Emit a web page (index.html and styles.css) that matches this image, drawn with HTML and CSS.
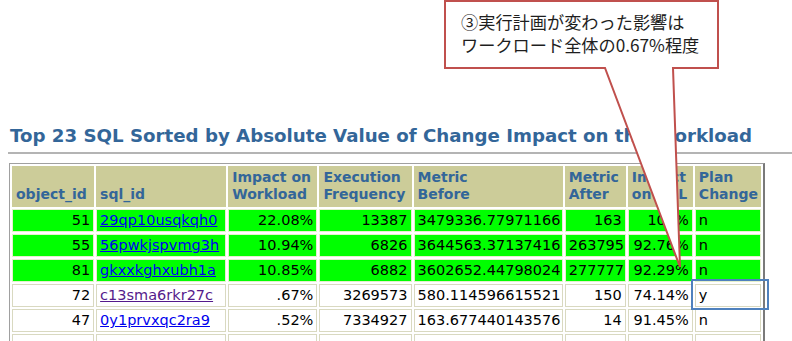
FILE: index.html
```html
<!DOCTYPE html>
<html>
<head>
<meta charset="utf-8">
<link rel="stylesheet" href="styles.css">
</head>
<body>
<div class="page">
  <h3 class="title">Top 23 SQL Sorted by Absolute Value of Change Impact on the Workload</h3>
  <div class="rule"></div>
  <table class="report">
    <colgroup>
      <col class="c1"><col class="c2"><col class="c3"><col class="c4"><col class="c5"><col class="c6"><col class="c7"><col class="c8">
    </colgroup>
    <thead>
      <tr>
        <th>object_id</th>
        <th>sql_id</th>
        <th>Impact on<br>Workload</th>
        <th>Execution<br>Frequency</th>
        <th>Metric<br>Before</th>
        <th>Metric<br>After</th>
        <th>Impact<br>on SQL</th>
        <th>Plan<br>Change</th>
      </tr>
    </thead>
    <tbody>
      <tr class="hit">
        <td class="num">51</td><td><a href="#a">29qp10usqkqh0</a></td><td class="num">22.08%</td><td class="num">13387</td><td>3479336.77971166</td><td class="num">163</td><td class="num">100%</td><td>n</td>
      </tr>
      <tr class="hit">
        <td class="num">55</td><td><a href="#b">56pwkjspvmg3h</a></td><td class="num">10.94%</td><td class="num">6826</td><td>3644563.37137416</td><td class="num">263795</td><td class="num">92.76%</td><td>n</td>
      </tr>
      <tr class="hit">
        <td class="num">81</td><td><a href="#c">gkxxkghxubh1a</a></td><td class="num">10.85%</td><td class="num">6882</td><td>3602652.44798024</td><td class="num">277777</td><td class="num">92.29%</td><td>n</td>
      </tr>
      <tr>
        <td class="num">72</td><td><a class="visited" href="#d">c13sma6rkr27c</a></td><td class="num">.67%</td><td class="num">3269573</td><td>580.114596615521</td><td class="num">150</td><td class="num">74.14%</td><td>y</td>
      </tr>
      <tr>
        <td class="num">47</td><td><a href="#e">0y1prvxqc2ra9</a></td><td class="num">.52%</td><td class="num">7334927</td><td>163.677440143576</td><td class="num">14</td><td class="num">91.45%</td><td>n</td>
      </tr>
      <tr>
        <td class="num">&nbsp;</td><td>&nbsp;</td><td>&nbsp;</td><td>&nbsp;</td><td>&nbsp;</td><td>&nbsp;</td><td>&nbsp;</td><td>&nbsp;</td>
      </tr>
    </tbody>
  </table>
</div>

<svg class="overlay" width="792" height="341" viewBox="0 0 792 341" xmlns="http://www.w3.org/2000/svg">
  <path d="M445 1 H718 V68 H673 L680 267 L605 68 H445 Z" fill="#ffffff" stroke="#c0504d" stroke-width="2" stroke-linejoin="miter"/>
  <rect x="692" y="280" width="76" height="29" fill="none" stroke="#4f81bd" stroke-width="2"/>
</svg>
<div class="callout-text">③実行計画が変わった影響は<br>ワークロード全体の0.67%程度</div>
</body>
</html>
```

FILE: styles.css
```css
html, body {
  margin: 0;
  padding: 0;
  overflow: hidden;
  background: #ffffff;
}

body {
  width: 792px;
  height: 341px;
  position: relative;
  font-family: "DejaVu Sans", Verdana, sans-serif;
}

.page {
  padding: 0 0 0 8px;
}

.title {
  margin: 125px 0 0 2px;
  font-family: "DejaVu Sans", Verdana, sans-serif;
  font-weight: bold;
  font-size: 18.2px;
  line-height: 21px;
  color: #336699;
  white-space: nowrap;
}

.rule {
  margin-top: 6px;
  height: 2px;
  background: #b4b4b4;
  margin-right: -8px;
}

.report {
  margin: 9px 0 0 1px;
  border-collapse: separate;
  border-spacing: 2px;
  table-layout: fixed;
  width: 756px;
  border-top: 1px solid #a0a0a0;
  border-left: 1px solid #a0a0a0;
  border-right: 2px solid #7a7a7a;
  border-bottom: 2px solid #7a7a7a;
  font-size: 14.5px;
}

.c1 { width: 82px; }
.c2 { width: 130px; }
.c3 { width: 89px; }
.c4 { width: 92px; }
.c5 { width: 149px; }
.c6 { width: 61px; }
.c7 { width: 65px; }
.c8 { width: 66px; }

.report th {
  background: #cccc99;
  color: #336699;
  font-weight: bold;
  font-size: 14px;
  line-height: 17px;
  text-align: left;
  vertical-align: bottom;
  height: 41px;
  box-sizing: border-box;
  padding: 0 2px 3px 3px;
  border: 1px solid #cccc99;
  white-space: nowrap;
  overflow: hidden;
}

.report td {
  height: 23px;
  box-sizing: border-box;
  padding: 1px 3px 1px 3px;
  line-height: 19px;
  border: 1px solid #d9d9c0;
  background: #ffffff;
  color: #000000;
  white-space: nowrap;
  overflow: hidden;
}

.report tr.hit td {
  background: #00ff00;
  border-color: #e4f0cc;
}

.report td.num {
  text-align: right;
}

.report a {
  color: #0000ee;
  text-decoration: underline;
}

.report a.visited {
  color: #551a8b;
}

.overlay {
  position: absolute;
  left: 0;
  top: 0;
  pointer-events: none;
}

.callout-text {
  position: absolute;
  left: 461px;
  top: 10px;
  font-family: "Noto Sans CJK JP", "Noto Sans", sans-serif;
  font-size: 17.2px;
  line-height: 23px;
  color: #1e1e1e;
  white-space: nowrap;
}
```
